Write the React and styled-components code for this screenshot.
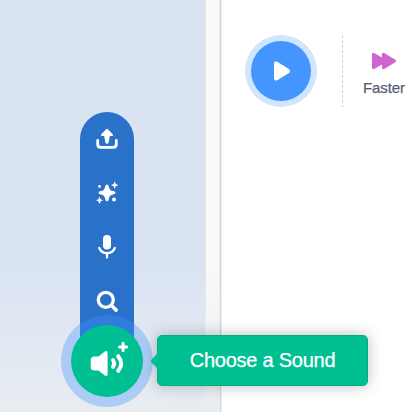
import React from "react";
import styled, { createGlobalStyle } from "styled-components";

const GlobalStyle = createGlobalStyle`
  * { box-sizing: border-box; }
  body { margin: 0; overflow: hidden; background: #fff; }
  button { border: 0; padding: 0; font: inherit; cursor: pointer; }
  svg { display: block; }
`;

const Page = styled.main`
  display: flex;
  width: 419px;
  height: 412px;
  font-family: "Liberation Sans", Arial, sans-serif;
`;

const Sidebar = styled.aside`
  position: relative;
  display: flex;
  width: 221px;
  height: 100%;
  flex: none;
  background: linear-gradient(to right, #d9e3f2 205px, #e3e8f0 205px, #e9ecf1 206px, #f9f9f9 206px);
  border-right: 1px solid #d6d6d6;
  box-shadow: inset -1px 0 #ececec, 1px 0 #f1f1f1;
`;

const BottomFade = styled.div`
  align-self: flex-end;
  width: 100%;
  height: 150px;
  background: linear-gradient(rgba(232, 237, 241, 0), rgba(232, 237, 241, 1));
`;

const ActionMenu = styled.nav`
  position: absolute;
  left: 61px;
  bottom: 5px;
  display: flex;
  flex-direction: column;
  align-items: center;
  width: 92px;
`;

const MoreActions = styled.div`
  display: flex;
  flex-direction: column;
  width: 54px;
  height: 249px;
  margin-bottom: -46px;
  border-radius: 27px 27px 0 0;
  background: #2971c9;
`;

const ActionButton = styled.button`
  display: grid;
  place-items: center;
  width: 54px;
  height: 54px;
  background: transparent;
`;

const MainButton = styled.button`
  position: relative;
  display: grid;
  place-items: center;
  width: 72px;
  height: 72px;
  margin: 10px;
  border-radius: 50%;
  background: #00bf92;
  box-shadow: 0 0 0 10px rgba(66, 145, 255, 0.35);
`;

const Tooltip = styled.div`
  position: absolute;
  left: 96px;
  bottom: 21px;
  display: flex;
  align-items: center;
  justify-content: center;
  width: 211px;
  height: 51px;
  border: 1px solid #06ab83;
  border-radius: 5px;
  background: #00bf92;
  box-shadow: 0 0 15px rgba(0, 0, 0, 0.25);
  color: #fff;
  font-size: 20px;
  letter-spacing: -0.24px;
  -webkit-text-stroke: 0.25px currentColor;
  white-space: nowrap;
`;

const TooltipArrow = styled.svg`
  position: absolute;
  left: -8px;
  top: 16px;
`;

const Editor = styled.section`
  display: flex;
  align-items: flex-start;
  flex: 1;
  padding: 35px 0 0 24px;
`;

const PlayButton = styled.button`
  display: grid;
  place-items: center;
  width: 60px;
  height: 60px;
  margin: 6px;
  border-radius: 50%;
  background: #4496fe;
  box-shadow: 0 0 0 6px #d0e5ff;
`;

const Divider = styled.div`
  width: 1px;
  height: 72px;
  margin-left: 25px;
  background: repeating-linear-gradient(#d2d2d2 0 3px, transparent 3px 5px);
`;

const EffectButton = styled.button`
  display: flex;
  flex-direction: column;
  align-items: center;
  gap: 9px;
  width: 44px;
  margin: 17px 0 0 19px;
  background: transparent;
  color: #575e75;
  font-size: 15px;
  line-height: 17px;
  letter-spacing: -0.1px;
  -webkit-text-stroke: 0.25px currentColor;
`;

const UploadIcon = () => (
  <svg width="24" height="24" viewBox="0 -0.5 24 24">
    <path d="M2.7 13v3.8q0 3.1 3.1 3.1h12.4q3.1 0 3.1-3.1V13" fill="none" stroke="#fff" strokeWidth="2.8" strokeLinecap="round" />
    <path d="M12 1.2q.5 0 .9.5l4.8 5q1.1 1.5-.5 1.7h-2.5v1.2l-1.1 5.5q-.3 1.2-1.6 1.2t-1.6-1.2L9.3 9.6V8.4H6.8q-1.6-.2-.5-1.7l4.8-5q.4-.5.9-.5z" fill="#fff" />
  </svg>
);

const SurpriseIcon = () => (
  <svg width="24" height="24" viewBox="0 0 24 24" fill="#fff">
    <path d="M12 3.500c1 0 1.500.8 1.800 2.200.7 3 1.600 3.800 4.300 4.400 1.500.3 2.300.8 2.300 1.700s-.8 1.500-2.300 1.800c-2.700.6-3.600 1.500-4.300 4.400-.3 1.400-.8 2.300-1.800 2.300s-1.500-.9-1.800-2.300c-.7-2.900-1.600-3.800-4.300-4.400-1.500-.3-2.300-.9-2.300-1.800s.8-1.400 2.300-1.700c2.700-.6 3.600-1.400 4.300-4.400.3-1.400.8-2.200 1.800-2.200z" />
    <path d="M19.700.8c.5 0 .7 1.900 1.100 2.300s2.300.6 2.300 1.100-1.900.7-2.300 1.100-.6 2.400-1.100 2.400-.7-2-1.100-2.400-2.300-.6-2.300-1.100 1.900-.7 2.300-1.100.6-2.300 1.100-2.300zM4.500 16c.5 0 .7 1.800 1.100 2.200s2.300.6 2.300 1.100-1.900.7-2.300 1.100-.6 2.400-1.100 2.400-.7-2-1.100-2.400-2.300-.6-2.300-1.100 1.900-.7 2.300-1.100.6-2.200 1.100-2.200z" />
    <circle cx="4.5" cy="5.4" r="1.4" />
    <circle cx="19" cy="18.4" r="2" />
  </svg>
);

const RecordIcon = () => (
  <svg width="24" height="24" viewBox="0 0 24 24">
    <rect x="8" y="0" width="8" height="14.5" rx="4" fill="#fff" />
    <path d="M4.2 13c1.500 3.600 4.600 5.200 7.800 5.200s6.300-1.600 7.800-5.200M12 18.300v4.300" fill="none" stroke="#fff" strokeWidth="2.3" strokeLinecap="round" />
  </svg>
);

const SearchIcon = () => (
  <svg width="24" height="24" viewBox="0 0 24 24" fill="none" stroke="#fff">
    <circle cx="10.8" cy="10.8" r="7.5" strokeWidth="3.3" />
    <path d="M16.5 16.5l4.700 4.600" strokeWidth="3.6" strokeLinecap="round" />
  </svg>
);

const SoundIcon = () => (
  <svg width="72" height="72" viewBox="0 0 72 72" fill="none" stroke="#fff">
    <path d="M33.800 26.400Q36.600 25 36.600 28v21q0 3-2.800 1.600L27.600 45.500h-4Q19.700 45.500 19.700 42v-7q0-3.500 3.900-3.500h4z" fill="#fff" stroke="none" />
    <path d="M42 35q2.400 3.500 0 7" strokeWidth="3.8" strokeLinecap="round" />
    <path d="M47.200 31.200q5.800 7.300 0 14.600" strokeWidth="4" strokeLinecap="round" />
    <path d="M52.100 18.400v7.200M48.500 22h7.200" strokeWidth="3.1" strokeLinecap="round" />
  </svg>
);

const PlayIcon = () => (
  <svg width="60" height="60" viewBox="0 0 60 60">
    <path d="M23 23q0-4 3.700-2.100l10.800 6.800q3.200 2.300 0 4.600l-10.800 6.600Q23 40.800 23 37z" fill="#fff" />
  </svg>
);

const FasterIcon = () => (
  <svg width="26" height="18" viewBox="0 0 26 18" fill="#cf63cf">
    <path d="M1 2.600Q1 .2 3.200 1.100L11 5.400V2.600Q11 .2 13.200 1.100l11.100 6.700q1.600 1.200 0 2.400l-11.100 6.700q-2.200.9-2.200-1.500V12.600l-7.800 4.300Q1 17.800 1 15.400z" />
  </svg>
);

const actions = [
  ["Upload Sound", UploadIcon],
  ["Surprise", SurpriseIcon],
  ["Record", RecordIcon],
  ["Search", SearchIcon],
];

export default function App() {
  return (
    <Page>
      <GlobalStyle />
      <Sidebar>
        <BottomFade />
        <ActionMenu>
          <MoreActions>
            {actions.map(([label, Icon]) => (
              <ActionButton key={label} aria-label={label}><Icon /></ActionButton>
            ))}
          </MoreActions>
          <MainButton aria-label="Choose a Sound"><SoundIcon /></MainButton>
          <Tooltip role="tooltip">
            <TooltipArrow width="9" height="18" viewBox="0 0 9 18">
              <path d="M9 0L1.500 7.500q-1.500 1.500 0 3L9 18z" fill="#00bf92" />
            </TooltipArrow>
            Choose a Sound
          </Tooltip>
        </ActionMenu>
      </Sidebar>
      <Editor>
        <PlayButton aria-label="Play"><PlayIcon /></PlayButton>
        <Divider />
        <EffectButton>
          <FasterIcon />
          <span>Faster</span>
        </EffectButton>
      </Editor>
    </Page>
  );
}
